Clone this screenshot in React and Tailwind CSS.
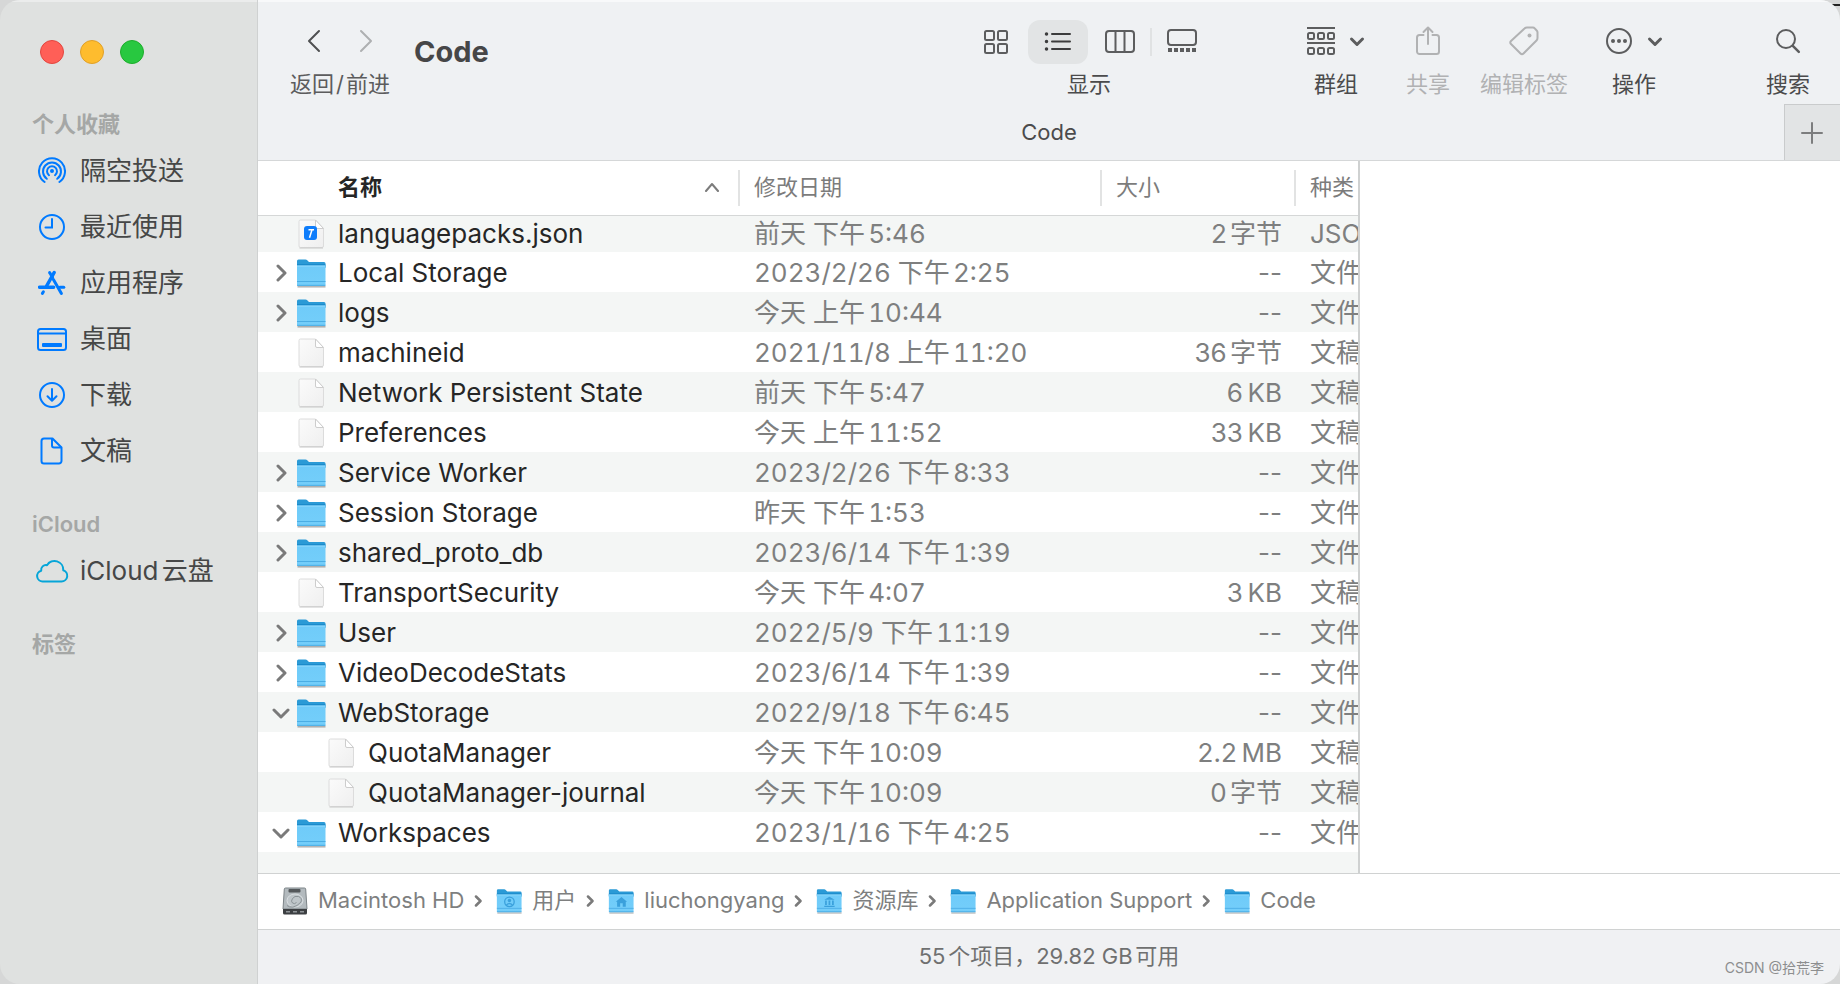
import { useState } from 'react';

const favorites = [
  { name: '隔空投送', icon: AirdropIcon },
  { name: '最近使用', icon: ClockIcon },
  { name: '应用程序', icon: AppsIcon },
  { name: '桌面', icon: DesktopIcon },
  { name: '下载', icon: DownloadIcon },
  { name: '文稿', icon: DocumentIcon },
];

const files = [
  { name: 'languagepacks.json', type: 'json', date: '前天 下午5:46', size: '2字节', kind: 'JSON' },
  { name: 'Local Storage', type: 'folder', date: '2023/2/26 下午2:25', size: '--', kind: '文件夹' },
  { name: 'logs', type: 'folder', date: '今天 上午10:44', size: '--', kind: '文件夹' },
  { name: 'machineid', type: 'file', date: '2021/11/8 上午11:20', size: '36字节', kind: '文稿' },
  { name: 'Network Persistent State', type: 'file', date: '前天 下午5:47', size: '6\u2009KB', kind: '文稿' },
  { name: 'Preferences', type: 'file', date: '今天 上午11:52', size: '33\u2009KB', kind: '文稿' },
  { name: 'Service Worker', type: 'folder', date: '2023/2/26 下午8:33', size: '--', kind: '文件夹' },
  { name: 'Session Storage', type: 'folder', date: '昨天 下午1:53', size: '--', kind: '文件夹' },
  { name: 'shared_proto_db', type: 'folder', date: '2023/6/14 下午1:39', size: '--', kind: '文件夹' },
  { name: 'TransportSecurity', type: 'file', date: '今天 下午4:07', size: '3\u2009KB', kind: '文稿' },
  { name: 'User', type: 'folder', date: '2022/5/9 下午11:19', size: '--', kind: '文件夹' },
  { name: 'VideoDecodeStats', type: 'folder', date: '2023/6/14 下午1:39', size: '--', kind: '文件夹' },
  { name: 'WebStorage', type: 'folder', open: true, date: '2022/9/18 下午6:45', size: '--', kind: '文件夹' },
  { name: 'QuotaManager', type: 'file', child: true, date: '今天 下午10:09', size: '2.2\u2009MB', kind: '文稿' },
  { name: 'QuotaManager-journal', type: 'file', child: true, date: '今天 下午10:09', size: '0字节', kind: '文稿' },
  { name: 'Workspaces', type: 'folder', open: true, date: '2023/1/16 下午4:25', size: '--', kind: '文件夹' },
];

const crumbs = [
  { name: 'Macintosh HD', icon: 'disk' },
  { name: '用户', icon: 'users' },
  { name: 'liuchongyang', icon: 'home' },
  { name: '资源库', icon: 'library' },
  { name: 'Application Support', icon: 'plain' },
  { name: 'Code', icon: 'plain' },
];

function AirdropIcon() {
  return (
    <svg width="28" height="28" viewBox="0 0 28 28" fill="none" stroke="#007aff" strokeWidth="2" strokeLinecap="round">
      <circle cx="14" cy="14" r="2" fill="#007aff" stroke="none" />
      <path d="M11 18.2a5 5 0 1 1 6 0" />
      <path d="M8.8 21.8a9 9 0 1 1 10.4 0" />
      <path d="M6.6 25a13 13 0 1 1 14.8 0" />
    </svg>
  );
}

function ClockIcon() {
  return (
    <svg width="28" height="28" viewBox="0 0 28 28" fill="none" stroke="#007aff" strokeWidth="2" strokeLinecap="round">
      <circle cx="14" cy="14" r="12" />
      <path d="M14 6v8.5H7.5" />
    </svg>
  );
}

function AppsIcon() {
  return (
    <svg width="28" height="28" viewBox="0 0 28 28" fill="none" stroke="#007aff" strokeWidth="3" strokeLinecap="round">
      <path d="M16.2 3.5L8.6 17" strokeWidth="3.5" />
      <path d="M11.6 3.5l3 5" />
      <path d="M1.6 18.2h14" strokeWidth="3.5" />
      <path d="M5.4 22.8l-1 1.6" />
      <path d="M15.4 10.5l8 14" />
      <path d="M21.8 18.2h4" />
    </svg>
  );
}

function DesktopIcon() {
  return (
    <svg width="30" height="28" viewBox="0 0 30 28" fill="none" stroke="#007aff" strokeWidth="2">
      <rect x="1" y="4" width="28" height="21" rx="2.5" />
      <path d="M1 8.500h28" />
      <rect x="5" y="18" width="20" height="4" rx="1" fill="#007aff" stroke="none" />
    </svg>
  );
}

function DownloadIcon() {
  return (
    <svg width="28" height="28" viewBox="0 0 28 28" fill="none" stroke="#007aff" strokeWidth="2" strokeLinecap="round" strokeLinejoin="round">
      <circle cx="14" cy="14" r="12" />
      <path d="M14 8v11.5M9.5 15.2l4.5 4.5 4.5-4.5" />
    </svg>
  );
}

function DocumentIcon() {
  return (
    <svg width="28" height="28" viewBox="0 0 28 28" fill="none" stroke="#007aff" strokeWidth="2" strokeLinejoin="round">
      <path d="M6 1.500h8.500l9 9v13.500a2.500 2.500 0 0 1-2.500 2.500H6A2.500 2.500 0 0 1 3.500 24V4A2.500 2.500 0 0 1 6 1.500z" />
      <path d="M14 1.500v7a2 2 0 0 0 2 2h7.500" />
    </svg>
  );
}

function CloudIcon() {
  return (
    <svg width="34" height="28" viewBox="0 0 34 28" fill="none" stroke="#06a5d8" strokeWidth="2" strokeLinejoin="round">
      <path d="M8 24.500h18.500a5.800 5.800 0 0 0 1.800-11.300A8.800 8.800 0 0 0 12 8.200a4.800 4.800 0 0 0-5.800 5.500A5.500 5.500 0 0 0 8 24.500z" />
    </svg>
  );
}

function Chevron({ dir }) {
  const paths = {
    right: 'M6 2l7 7-7 7',
    down: 'M2 6l7 7 7-7',
  };
  return (
    <svg width="18" height="18" viewBox="0 0 18 18" fill="none" stroke="#7a7a7a" strokeWidth="3" strokeLinecap="round" strokeLinejoin="round">
      <path d={paths[dir]} />
    </svg>
  );
}

function MenuChevron() {
  return (
    <svg width="16" height="12" viewBox="0 0 16 12" fill="none" stroke="#5c5d5e" strokeWidth="3" strokeLinecap="round" strokeLinejoin="round">
      <path d="M2.500 4l5.500 5.500L13.500 4" />
    </svg>
  );
}

function FolderIcon({ mark, width = 30, height = 30 }) {
  return (
    <svg width={width} height={height} viewBox="0 0 30 30">
      <defs>
        <linearGradient id="front" x1="0" y1="0" x2="0" y2="1">
          <stop offset="0" stopColor="#6fcbf9" />
          <stop offset="1" stopColor="#74cefa" />
        </linearGradient>
      </defs>
      <path d="M1.500 28.800h28" stroke="#000" strokeOpacity=".3" strokeWidth="1.500" />
      <path d="M1 3q0-1.500 1.500-1.500h7q1 0 2 1l1.500 1.500h15q1.500 0 1.500 1.500V10H1z" fill="#2b9ad6" />
      <path d="M1 6.500h28.500V9H1z" fill="#0d7cc0" />
      <path d="M1 7.500h28.500v19q0 1.500-1.500 1.500H2.500Q1 28 1 26.500z" fill="url(#front)" />
      <path d="M1 8h28.500" stroke="#93dbfd" />
      <path d="M1 23.500h28.500M1 27.300h28.500" stroke="#4aade4" />
      {mark === 'users' && (
        <g fill="none" stroke="#3aa0dc" strokeWidth="1.500">
          <circle cx="15.500" cy="16" r="5.500" />
          <circle cx="15.500" cy="14.500" r="2" fill="#3aa0dc" stroke="none" />
          <path d="M12 19.500q3.500-3 7 0" />
        </g>
      )}
      {mark === 'home' && <path d="M9 16l6.500-5.500L22 16h-1.500v5.500h-3.500v-4h-3v4h-3.500V16z" fill="#3aa0dc" />}
      {mark === 'library' && (
        <path d="M9.500 13.500l6-3.500 6 3.500zM10.500 14.500h2v5h-2zM14.500 14.500h2v5h-2zM18.500 14.500h2v5h-2zM9.500 20.500h12v1.500h-12z" fill="#3aa0dc" />
      )}
    </svg>
  );
}

function FileIcon({ json }) {
  return (
    <svg width="30" height="32" viewBox="0 0 30 32">
      <defs>
        <linearGradient id="paper" x1="0" y1="0" x2="1" y2="1">
          <stop offset="0" stopColor="#fbfbfb" />
          <stop offset="1" stopColor="#efefef" />
        </linearGradient>
      </defs>
      <path d="M4.500 2h15l8 8.500V28q0 1.500-1.500 1.500H4.500Q3 29.500 3 28V3.500Q3 2 4.500 2z" fill="url(#paper)" stroke="#dcdcdc" />
      <path d="M3.500 30h23.500" stroke="#c8c8c8" />
      <path d="M19.500 2v7q0 1.500 1.500 1.500h6.500z" fill="#fff" stroke="#cdcdcd" />
      {json && (
        <g>
          <rect x="8" y="8" width="13" height="14" rx="3" fill="#0f7dfb" />
          <path d="M12.500 11.800h5.500M16 11.800l-2.500 8" stroke="#fff" strokeWidth="1.500" fill="none" />
        </g>
      )}
    </svg>
  );
}

function DiskIcon() {
  return (
    <svg width="26" height="30" viewBox="0 0 26 30">
      <path d="M3.500 2h19q1 0 1.200 1L25 23H1L2.300 3q.2-1 1.200-1z" fill="#b3babe" stroke="#7d8488" />
      <rect x="6.500" y="3" width="12" height="3.500" rx="1" fill="#54585b" />
      <ellipse cx="13" cy="14.500" rx="8" ry="6.500" fill="#bfc6ca" stroke="#d9dee1" />
      <path d="M5 19.500q2 2 6 1.500t8-5q1.500-4-2.500-5.500-4-1-6 2t0 4.500q2 1.500 4-.5" fill="none" stroke="#8b9397" />
      <path d="M1 23h24v4q0 1.500-1.500 1.500h-21Q1 28.500 1 27z" fill="#3c3f42" />
      <path d="M4 25.800h4M11 25.800h4M18 25.800h4" stroke="#8f9497" strokeWidth="1.500" />
    </svg>
  );
}

function Tool({ label, className, disabled, children }) {
  return (
    <button
      disabled={disabled}
      className={'flex shrink-0 flex-col items-center gap-1 ' + (disabled ? 'text-[#b1b2b3] ' : 'text-[#4b4b4c] ') + className}
    >
      <span className="flex h-[42px] items-center gap-3.5">{children}</span>
      <span className="text-[22px] leading-9 whitespace-nowrap">{label}</span>
    </button>
  );
}

function SidebarItem({ name, icon: Icon }) {
  return (
    <li>
      <a href="#" className="flex h-14 items-center text-[26px] text-[#464747]">
        <span className="flex w-[104px] shrink-0 justify-center">
          <Icon />
        </span>
        <span className="-ml-6 pb-0.5 whitespace-nowrap">{name}</span>
      </a>
    </li>
  );
}

function Sidebar() {
  return (
    <aside className="w-[258px] shrink-0 border-r border-[#cfd1d1] bg-[#dfe1e0] shadow-[inset_0_2px_0_#ebecec]">
      <div className="flex h-[105px] items-start gap-4 pt-10 pl-10">
        <button aria-label="关闭" className="size-6 rounded-full border border-[#e2463f] bg-[#ff5f57]" />
        <button aria-label="最小化" className="size-6 rounded-full border border-[#e0a028] bg-[#febc2e]" />
        <button aria-label="缩放" className="size-6 rounded-full border border-[#1dad2b] bg-[#28c840]" />
      </div>
      <nav className="flex flex-col gap-[26px]">
        <div>
          <h2 className="pl-8 text-[22px] leading-[38px] font-semibold text-[#a5a7a6]">个人收藏</h2>
          <ul>
            {favorites.map((item) => (
              <SidebarItem key={item.name} {...item} />
            ))}
          </ul>
        </div>
        <div>
          <h2 className="pl-8 text-[22px] leading-[38px] font-semibold text-[#a5a7a6]">iCloud</h2>
          <ul>
            <SidebarItem name="iCloud云盘" icon={CloudIcon} />
          </ul>
        </div>
        <h2 className="pl-8 text-[22px] leading-[38px] font-semibold text-[#a5a7a6]">标签</h2>
      </nav>
    </aside>
  );
}

function ViewSwitch() {
  const [view, setView] = useState('list');
  const cls = (name) => 'flex h-11 w-[60px] items-center justify-center rounded-xl ' + (view === name ? 'bg-[#e2e4e5]' : '');

  return (
    <div className="flex shrink-0 flex-col items-center gap-1">
      <div className="flex items-center gap-0.5">
        <button aria-label="图标" className={cls('icons')} onClick={() => setView('icons')}>
          <svg width="26" height="26" viewBox="0 0 26 26" fill="none" stroke="#5c5d5e" strokeWidth="2">
            <rect x="2" y="2" width="9" height="9" rx="1.500" />
            <rect x="15" y="2" width="9" height="9" rx="1.500" />
            <rect x="2" y="15" width="9" height="9" rx="1.500" />
            <rect x="15" y="15" width="9" height="9" rx="1.500" />
          </svg>
        </button>
        <button aria-label="列表" className={cls('list')} onClick={() => setView('list')}>
          <svg width="28" height="22" viewBox="0 0 28 22" fill="none" stroke="#3c3c3d" strokeWidth="2" strokeLinecap="round">
            <path d="M8 3h18M8 10.500h18M8 18h18" />
            <path d="M2.500 3h.01M2.500 10.500h.01M2.500 18h.01" strokeWidth="3.500" />
          </svg>
        </button>
        <button aria-label="分栏" className={cls('columns')} onClick={() => setView('columns')}>
          <svg width="32" height="26" viewBox="0 0 32 26" fill="none" stroke="#5c5d5e" strokeWidth="2">
            <rect x="2" y="2" width="28" height="21" rx="3" />
            <path d="M11.500 2v21M20.500 2v21" />
          </svg>
        </button>
        <span className="-mx-0.5 h-7 w-0.5 bg-[#e0e2e3]" />
        <button aria-label="画廊" className={cls('gallery')} onClick={() => setView('gallery')}>
          <svg width="30" height="26" viewBox="0 0 30 26" fill="none" stroke="#5c5d5e" strokeWidth="2">
            <rect x="1" y="1" width="28" height="15" rx="3" />
            <path d="M1 21h28" strokeWidth="4" strokeDasharray="4 2" />
          </svg>
        </button>
      </div>
      <span className="text-[22px] leading-8 text-[#4b4b4c]">显示</span>
    </div>
  );
}

function Toolbar() {
  return (
    <header className="shrink-0 border-b border-[#d5d7d8] bg-[#eff1f3] shadow-[inset_0_2px_0_#f8f9fa]">
      <div className="flex h-[104px] items-start pt-5 pr-7 pl-8">
        <div className="flex w-[100px] shrink-0 flex-col items-center gap-1">
          <div className="flex h-[42px] items-center gap-[38px]">
            <button aria-label="返回">
              <svg width="14" height="24" viewBox="0 0 14 24" fill="none" stroke="#4f5051" strokeWidth="2" strokeLinecap="round" strokeLinejoin="round">
                <path d="M12 2L2 12l10 10" />
              </svg>
            </button>
            <button aria-label="前进" disabled>
              <svg width="14" height="24" viewBox="0 0 14 24" fill="none" stroke="#aeb0b1" strokeWidth="2" strokeLinecap="round" strokeLinejoin="round">
                <path d="M2 2l10 10L2 22" />
              </svg>
            </button>
          </div>
          <span className="text-[22px] leading-9 whitespace-nowrap text-[#5c5c5d]">返回{'\u200a'}/{'\u200a'}前进</span>
        </div>
        <h1 className="ml-6 pt-3 text-[29px] leading-10 font-bold text-[#464647]">Code</h1>
        <div className="ml-auto flex items-start">
          <ViewSwitch />
          <Tool label="群组" className="ml-[88px] w-[72px]">
            <svg width="28" height="30" viewBox="0 0 28 30" fill="none" stroke="#5c5d5e" strokeWidth="2">
              <path d="M0 2h28M0 17h28" />
              <rect x="1" y="7" width="6" height="6" rx="1.500" />
              <rect x="11" y="7" width="6" height="6" rx="1.500" />
              <rect x="21" y="7" width="6" height="6" rx="1.500" />
              <rect x="1" y="22" width="6" height="6" rx="1.500" />
              <rect x="11" y="22" width="6" height="6" rx="1.500" />
              <rect x="21" y="22" width="6" height="6" rx="1.500" />
            </svg>
            <MenuChevron />
          </Tool>
          <Tool label="共享" disabled className="ml-8 w-12">
            <svg width="24" height="30" viewBox="0 0 24 30" fill="none" stroke="currentColor" strokeWidth="2" strokeLinecap="round" strokeLinejoin="round">
              <path d="M7.500 9H3.500A2.500 2.500 0 0 0 1 11.500v14A2.500 2.500 0 0 0 3.500 28h17a2.500 2.500 0 0 0 2.500-2.500v-14A2.500 2.500 0 0 0 20.500 9h-4" />
              <path d="M12 18V2M7.500 6L12 1.500 16.500 6" />
            </svg>
          </Tool>
          <Tool label="编辑标签" disabled className="ml-7 w-[88px]">
            <svg width="30" height="30" viewBox="0 0 30 30" fill="none" stroke="currentColor" strokeWidth="2" strokeLinejoin="round">
              <path d="M15.500 2.500q1-1 2.500-1h6q1 0 1.700.8l2 2.200q.8.800.8 1.800v5.700q0 1.500-1 2.500L14.500 27.500q-1.500 1.500-3 0L2 18q-1.500-1.500 0-3z" />
              <circle cx="20.500" cy="9.500" r="2" fill="currentColor" stroke="none" />
            </svg>
          </Tool>
          <Tool label="操作" className="ml-9 w-[60px]">
            <svg width="28" height="28" viewBox="0 0 28 28" fill="none" stroke="#5c5d5e" strokeWidth="2">
              <circle cx="14" cy="14" r="12" />
              <g fill="#5c5d5e" stroke="none">
                <circle cx="8" cy="14" r="2" />
                <circle cx="14" cy="14" r="2" />
                <circle cx="20" cy="14" r="2" />
              </g>
            </svg>
            <MenuChevron />
          </Tool>
          <Tool label="搜索" className="ml-[100px] w-12">
            <svg width="26" height="26" viewBox="0 0 26 26" fill="none" stroke="#5c5d5e" strokeWidth="2" strokeLinecap="round">
              <circle cx="11" cy="11" r="9" />
              <path d="M17.800 17.800l6 6" strokeWidth="2.500" />
            </svg>
          </Tool>
        </div>
      </div>
      <div className="flex h-14 items-stretch">
        <div className="flex flex-1 items-center justify-center pl-14 text-[22px] text-[#4b4b4c]">Code</div>
        <button aria-label="新标签页" className="flex w-14 items-center justify-center border-t border-l border-[#c9cbcc] bg-[#e2e4e5] pr-0.5">
          <svg width="22" height="22" viewBox="0 0 22 22" stroke="#7c7d7e" strokeWidth="2" strokeLinecap="round">
            <path d="M11 1v20M1 11h20" />
          </svg>
        </button>
      </div>
    </header>
  );
}

function FileTable() {
  return (
    <table className="w-full table-fixed border-collapse text-left whitespace-nowrap">
      <thead>
        <tr className="h-[54px] border-b border-[#d5d7d7] text-[22px] leading-8 text-[#7c7c7c]">
          <th className="p-0 pl-20 font-semibold text-[#262626]">
            <span className="flex h-9 items-center justify-between border-r-2 border-[#e2e3e3] pr-[18px] pb-0.5">
              名称
              <svg width="16" height="10" viewBox="0 0 16 10" fill="none" stroke="#7c7c7c" strokeWidth="2" strokeLinecap="round" strokeLinejoin="round">
                <path d="M2 9l6-7 6 7" />
              </svg>
            </span>
          </th>
          <th className="w-[362px] p-0 font-normal">
            <span className="flex h-9 items-center border-r-2 border-[#e2e3e3] pb-0.5 pl-3.5">修改日期</span>
          </th>
          <th className="w-[194px] p-0 font-normal">
            <span className="flex h-9 items-center border-r-2 border-[#e2e3e3] pb-0.5 pl-3.5">大小</span>
          </th>
          <th className="w-[62px] p-0 font-normal">
            <span className="flex h-9 items-center pb-0.5 pl-3.5">种类</span>
          </th>
        </tr>
      </thead>
      <tbody className="text-[26px] leading-9 text-[#7e7f7f]">
        {files.map((file) => (
          <tr key={file.name} className="h-10 odd:bg-[#f4f6f5] even:bg-white first:h-[37px] [&:not(:first-child)>td]:pt-0.5">
            <td className="p-0 pl-3.5 text-[#262626]">
              <span className="flex items-center">
                {file.type === 'folder' ? (
                  <button aria-label={file.name} className="mr-1.5">
                    <Chevron dir={file.open ? 'down' : 'right'} />
                  </button>
                ) : (
                  <span className={file.child ? 'w-[54px]' : 'w-6'} />
                )}
                {file.type === 'folder' ? <FolderIcon /> : <FileIcon json={file.type === 'json'} />}
                <span className="ml-3">{file.name}</span>
              </span>
            </td>
            <td className="p-0 pl-3.5 tabular-nums">{file.date}</td>
            <td className="p-0 pr-3.5 text-right">{file.size}</td>
            <td className="overflow-hidden p-0 pl-3.5">{file.kind}</td>
          </tr>
        ))}
      </tbody>
    </table>
  );
}

function PathBar() {
  return (
    <nav className="flex h-[57px] shrink-0 items-center gap-2.5 border-y border-[#d0d2d2] bg-white pb-0.5 pl-6 text-[22px] whitespace-nowrap text-[#7e7f7f]">
      {crumbs.map((crumb, i) => (
        <span key={crumb.name} className="flex items-center gap-3.5">
          {i > 0 && (
            <svg width="8" height="12" viewBox="0 0 8 12" fill="none" stroke="#7a7a7a" strokeWidth="2.500" strokeLinecap="round" strokeLinejoin="round">
              <path d="M2 1.500L6.500 6 2 10.500" />
            </svg>
          )}
          <a href="#" className="flex items-center gap-2.5">
            {crumb.icon === 'disk' ? <DiskIcon /> : <FolderIcon mark={crumb.icon} width={26} height={26} />}
            {crumb.name}
          </a>
        </span>
      ))}
    </nav>
  );
}

export default function App() {
  return (
    <div className="relative h-screen bg-[#d6d7d7] font-['Inter','Noto_Sans_CJK_SC',sans-serif] [text-autospace:normal]">
      <span className="absolute top-1 right-0 h-0.5 w-5 bg-[#222]" />
      <div className="relative flex h-full overflow-hidden rounded-[20px]">
        <Sidebar />
        <main className="flex min-w-0 flex-1 flex-col">
          <Toolbar />
          <div className="flex min-h-0 flex-1 bg-white">
            <div className="min-w-0 flex-1 overflow-hidden border-r-2 border-[#cfd1d1] bg-[#f4f6f5]">
              <div className="bg-white">
                <FileTable />
              </div>
            </div>
            <div className="w-[480px] shrink-0 bg-white" />
          </div>
          <PathBar />
          <footer className="flex h-[54px] shrink-0 items-center justify-center bg-[#f0f1f3] pb-0.5 text-[22px] text-[#6f7070]">
            55个项目，29.82 GB可用
          </footer>
        </main>
        <span className="absolute right-4 bottom-1.5 text-sm text-[#8d8e8f]">CSDN @拾荒李</span>
      </div>
    </div>
  );
}
